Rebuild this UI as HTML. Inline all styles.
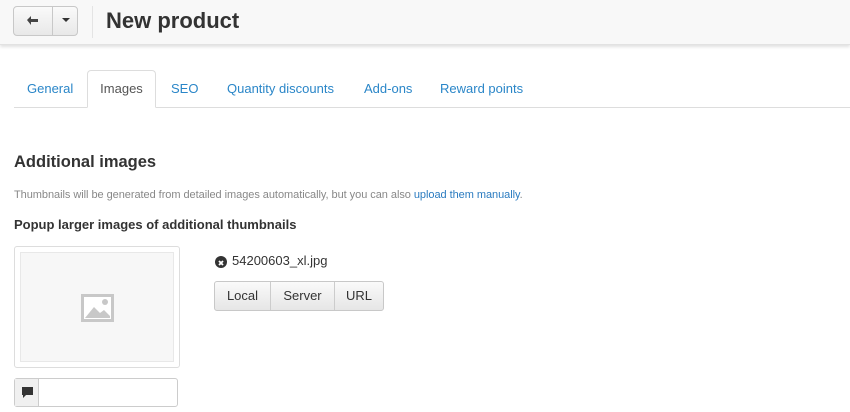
<!DOCTYPE html><html><head><style>
*{box-sizing:border-box;margin:0;padding:0}
body{width:850px;height:412px;overflow:hidden;background:#fff;font-family:"Liberation Sans",Arial,sans-serif;color:#333;position:relative}
.hdr{position:absolute;left:0;top:0;width:850px;height:45px;background:#f8f8f8;box-shadow:0 2px 3px rgba(0,0,0,.12);border-bottom:1px solid #e2e2e2}
.bg{position:absolute;left:13px;top:6px;height:30px;width:65px;border:1px solid #c8c8c8;border-radius:4px;background:linear-gradient(#fafafa,#e8e8e8);}
.bg .sep{position:absolute;left:38px;top:0;bottom:0;border-left:1px solid #c8c8c8}
.vl{position:absolute;left:92px;top:6px;height:32px;border-left:1px solid #e4e4e4}
h1{position:absolute;left:106px;top:8px;font-size:22px;font-weight:bold;color:#333}
.tabs{position:absolute;left:14px;top:107px;right:0;border-top:1px solid #ddd}
.tab{position:absolute;top:81px;font-size:13px;color:#2a86c8}
.act{position:absolute;left:87px;top:70px;width:69px;height:38px;border:1px solid #ddd;border-bottom:1px solid #fff;border-radius:4px 4px 0 0;background:#fff;color:#555;font-size:13px;text-align:center;padding-top:10px}
h2{position:absolute;left:14px;top:153px;font-size:16.5px;font-weight:bold}
.hint{position:absolute;left:14px;top:189px;font-size:11px;color:#888;letter-spacing:-0.05px}
.hint span{color:#2a7bc0}
h3{position:absolute;left:14px;top:217px;font-size:13px;font-weight:bold}
.box{position:absolute;left:14px;top:246px;width:166px;height:122px;border:1px solid #ddd;border-radius:3px}
.inner{position:absolute;left:5px;top:5px;width:154px;height:110px;background:#f7f7f7;border:1px solid #e8e8e8}
.inp{position:absolute;left:14px;top:378px;width:164px;height:29px;border:1px solid #ccc;border-radius:3px}
.inp .ad{position:absolute;left:0;top:0;width:24px;height:27px;background:#f0f0f0;border-right:1px solid #ccc}
.fn{position:absolute;left:232px;top:253px;font-size:13px;color:#333}
.ic{position:absolute;left:215px;top:256px;width:12px;height:12px;border-radius:50%;background:#333}
.btns{position:absolute;left:214px;top:281px;height:30px;width:170px;border:1px solid #c8c8c8;border-radius:3px;background:linear-gradient(#fafafa,#e6e6e6);font-size:13px}
.btns div{position:absolute;top:0;height:28px;line-height:28px;text-align:center}
</style></head><body>
<div class="hdr">
<div class="bg"><div class="sep"></div>
<svg style="position:absolute;left:12px;top:8px" width="14" height="12"><path d="M1 5 L5 1 V4 H12 V7 H5 V10 Z" fill="#444"/></svg>
<svg style="position:absolute;left:48px;top:11px" width="8" height="5"><path d="M0 0H8L4 4Z" fill="#333"/></svg>
</div>
<div class="vl"></div>
<h1>New product</h1>
</div>
<div class="tabs"></div>
<div class="tab" style="left:27px">General</div>
<div class="act">Images</div>
<div class="tab" style="left:171px">SEO</div>
<div class="tab" style="left:227px">Quantity discounts</div>
<div class="tab" style="left:364px">Add-ons</div>
<div class="tab" style="left:440px">Reward points</div>
<h2>Additional images</h2>
<div class="hint">Thumbnails will be generated from detailed images automatically, but you can also <span>upload them manually</span>.</div>
<h3>Popup larger images of additional thumbnails</h3>
<div class="box"><div class="inner">
<svg style="position:absolute;left:60px;top:41px" width="33" height="28"><rect x="1.5" y="1.5" width="30" height="25" fill="#fff" stroke="#c8c8c8" stroke-width="3"/><path d="M4 24 L13 13 L19 19 L23 16 L29 22 V24Z" fill="#c8c8c8"/><circle cx="24" cy="8" r="3" fill="#c8c8c8"/></svg>
</div></div>
<div class="inp"><div class="ad"><svg style="position:absolute;left:7px;top:8px" width="11" height="11"><path d="M0 0H11V8H4L1 11V8H0Z" fill="#333"/></svg></div></div>
<div class="ic"><svg width="12" height="12"><path d="M4 4L8 8M8 4L4 8" stroke="#fff" stroke-width="1.8"/></svg></div>
<div class="fn">54200603_xl.jpg</div>
<div class="btns">
<div style="left:0;width:56px;border-right:1px solid #ccc">Local</div>
<div style="left:56px;width:64px;border-right:1px solid #ccc">Server</div>
<div style="left:120px;width:48px">URL</div>
</div>
</body></html>
